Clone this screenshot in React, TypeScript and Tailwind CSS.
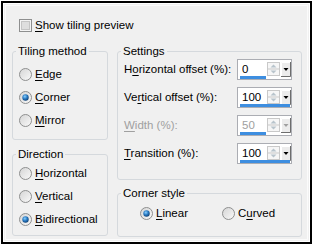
import React from "react";

const Radio = ({ checked }: { checked?: boolean }) => (
  <svg width="13" height="13" viewBox="0 0 13 13" className="shrink-0">
    <defs>
      <linearGradient id="rbg" x1="0" y1="0" x2="1" y2="1">
        <stop offset="0" stopColor="#d4d4d4" />
        <stop offset="1" stopColor="#fafafa" />
      </linearGradient>
      <radialGradient id="rdot" cx="0.4" cy="0.35" r="0.7">
        <stop offset="0" stopColor="#8ad1ff" />
        <stop offset="0.5" stopColor="#2a7bc4" />
        <stop offset="1" stopColor="#0d3c6e" />
      </radialGradient>
    </defs>
    <circle cx="6.5" cy="6.5" r="6" fill="url(#rbg)" stroke="#8e8f8f" />
    {checked && <circle cx="6.5" cy="6.5" r="3.2" fill="url(#rdot)" />}
  </svg>
);

const Check = () => (
  <svg width="13" height="13" viewBox="0 0 13 13" className="shrink-0">
    <rect x="0.5" y="0.5" width="12" height="12" fill="#f4f4f4" stroke="#8e8f8f" />
    <rect x="2.5" y="2.5" width="8" height="8" fill="#dedede" stroke="#c4c4c4" />
  </svg>
);

const Key = ({ text, at }: { text: string; at: number }) => (
  <>
    {text.slice(0, at)}
    <span className="underline underline-offset-[2px]">{text[at]}</span>
    {text.slice(at + 1)}
  </>
);

const RadioRow = ({ text, at, checked }: { text: string; at: number; checked?: boolean }) => (
  <div className="flex h-[13px] items-center gap-[3px]">
    <Radio checked={checked} />
    <span className="leading-[13px]">
      <Key text={text} at={at} />
    </span>
  </div>
);

const Spin = ({ value, full, disabled }: { value: string; full?: boolean; disabled?: boolean }) => (
  <div className="flex h-[21px] w-[55px] flex-col border border-[#abadb3] bg-white">
    <div className="flex h-[16px] items-center">
      <span className={`w-[29px] pl-[4px] pt-[1px] leading-[14px] ${disabled ? "text-[#a0a0a0]" : "text-black"}`}>
        {value}
      </span>
      <svg width="13" height="14" viewBox="0 0 13 14" className="mt-[2px]">
        <rect x="0.5" y="0.5" width="12" height="13" fill="#f6f6f6" stroke="#c9c9c9" />
        <line x1="1" y1="7" x2="12" y2="7" stroke="#c9c9c9" />
        <path d="M3.5 5.5 L6.5 2.5 L9.5 5.5 Z" fill="#b8c4cc" />
        <path d="M3.5 8.5 L6.5 11.5 L9.5 8.5 Z" fill="#b8c4cc" />
      </svg>
      <svg width="10" height="15" viewBox="0 0 10 15" className="ml-[1px] mt-[2px]">
        <rect x="0" y="0" width="10" height="15" fill="#ececec" />
        <path d="M0.5 14.5 V0.5 H9.5" fill="none" stroke="#ffffff" />
        <path d="M9.5 0 V14.5 H0" fill="none" stroke="#6d6d6d" />
        <path d="M2.5 6 L7.5 6 L5 9 Z" fill={disabled ? "#a0a0a0" : "#000000"} />
      </svg>
    </div>
    <div className="mt-auto flex h-[3px] pl-[2px] pr-[1px]">
      <div className={`h-[3px] bg-[#3d8ee0] ${full ? "w-full" : "w-[26px]"}`} />
    </div>
  </div>
);

const SettingRow = ({ label, at, value, full, disabled }: { label: string; at: number; value: string; full?: boolean; disabled?: boolean }) => (
  <div className="flex h-[21px] items-center pr-[9px]">
    <span className={disabled ? "text-[#a0a0a0]" : "text-black"}>
      <Key text={label} at={at} />
    </span>
    <div className="ml-auto">
      <Spin value={value} full={full} disabled={disabled} />
    </div>
  </div>
);

export default function App() {
  return (
    <div className="h-[245px] w-[315px] bg-white pl-[1px] pt-[1px] font-['Liberation_Sans',Arial,sans-serif] text-[11.5px] text-black">
      <div className="h-[243px] w-[311px] border-2 border-black">
        <div className="h-full w-full border border-white bg-[#f0f0f0] p-[1px]">
          <div className="h-full w-full border border-[#fbfbfb] pl-[6px] pt-[13px]">
            <div className="flex h-[13px] items-center gap-[3px] pl-[7px]">
              <Check />
              <span className="leading-[13px]">
                <Key text="Show tiling preview" at={0} />
              </span>
            </div>
            <div className="mt-[13px] flex gap-[9px]">
              <div className="flex w-[96px] flex-col gap-[8px]">
                <fieldset className="h-[95px] rounded-[3px] border border-[#d5d9dd] pl-[6px]">
                  <legend className="ml-[-3px] px-[2px] leading-[13px]">Tiling method</legend>
                  <div className="mt-[10px] flex flex-col gap-[10px]">
                    <RadioRow text="Edge" at={0} />
                    <RadioRow text="Corner" at={0} checked />
                    <RadioRow text="Mirror" at={0} />
                  </div>
                </fieldset>
                <fieldset className="h-[88px] rounded-[3px] border border-[#d5d9dd] pl-[6px]">
                  <legend className="ml-[-3px] px-[2px] leading-[13px]">Direction</legend>
                  <div className="mt-[6px] flex flex-col gap-[10px]">
                    <RadioRow text="Horizontal" at={0} />
                    <RadioRow text="Vertical" at={0} />
                    <RadioRow text="Bidirectional" at={0} checked />
                  </div>
                </fieldset>
              </div>
              <div className="flex w-[185px] flex-col gap-[7px]">
                <fieldset className="h-[135px] rounded-[3px] border border-[#d5d9dd] pl-[6px]">
                  <legend className="ml-[-3px] px-[2px] leading-[13px]">Settings</legend>
                  <div className="mt-[1px] flex flex-col gap-[7px]">
                    <SettingRow label="Horizontal offset (%):" at={1} value="0" />
                    <SettingRow label="Vertical offset (%):" at={2} value="100" full />
                    <SettingRow label="Width (%):" at={0} value="50" disabled />
                    <SettingRow label="Transition (%):" at={0} value="100" full />
                  </div>
                </fieldset>
                <fieldset className="h-[50px] rounded-[3px] border border-[#d5d9dd] pl-[22px]">
                  <legend className="ml-[-19px] px-[2px] leading-[13px]">Corner style</legend>
                  <div className="mt-[7px] flex">
                    <div className="w-[82px]">
                      <RadioRow text="Linear" at={0} checked />
                    </div>
                    <RadioRow text="Curved" at={1} />
                  </div>
                </fieldset>
              </div>
            </div>
          </div>
        </div>
      </div>
    </div>
  );
}
